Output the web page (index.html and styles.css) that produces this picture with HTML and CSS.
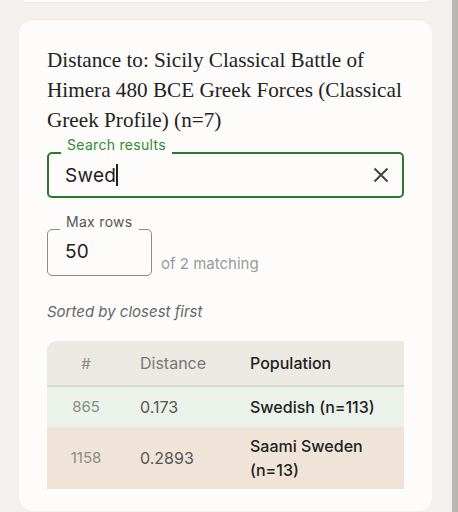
FILE: index.html
```html
<!DOCTYPE html>
<html lang="en">
<head>
    <meta charset="UTF-8">
    <meta name="viewport" content="width=device-width, initial-scale=1.0">
    <title>Distance results</title>
    <link rel="stylesheet" href="styles.css">
</head>
<body>
    <div class="page">
        <!-- tail of the card above -->
        <div class="card card-prev"></div>

        <!-- Distance card -->
        <div class="card">
            <h2 class="title">Distance to: Sicily Classical Battle of Himera 480 BCE Greek Forces (Classical Greek Profile) (n=7)</h2>

            <div class="field search-field">
                <span class="field-label">Search results</span>
                <div class="field-value">Swed<span class="caret"></span></div>
                <svg class="clear-icon" width="16" height="16" viewBox="0 0 16 16">
                    <path d="M1.5 1.5 L14.5 14.5 M14.5 1.5 L1.5 14.5" stroke="#444" stroke-width="2" fill="none"/>
                </svg>
            </div>

            <div class="rows-line">
                <div class="field rows-field">
                    <span class="field-label">Max rows</span>
                    <div class="field-value">50</div>
                </div>
                <span class="matching">of 2 matching</span>
            </div>

            <p class="sorted">Sorted by closest first</p>

            <div class="table-wrap">
                <table class="results">
                    <thead>
                        <tr>
                            <th class="col-rank">#</th>
                            <th class="col-dist">Distance</th>
                            <th class="col-pop">Population</th>
                        </tr>
                    </thead>
                    <tbody>
                        <tr class="row-near">
                            <td class="col-rank">865</td>
                            <td class="col-dist">0.173</td>
                            <td class="col-pop">Swedish (n=113)</td>
                        </tr>
                        <tr class="row-far">
                            <td class="col-rank">1158</td>
                            <td class="col-dist">0.2893</td>
                            <td class="col-pop">Saami Sweden (n=13)</td>
                        </tr>
                    </tbody>
                </table>
            </div>
        </div>
    </div>
    <div class="scrollbar"></div>
</body>
</html>
```

FILE: styles.css
```css
body {
    font-family: Inter, "Noto Sans", sans-serif;
    margin: 0;
    padding: 0;
    display: flex;
    height: 100vh;
    overflow: hidden;
    background-color: #f2f1ed;
    color: #222;
}
.page {
    flex: 1;
    padding: 0 20px 0 19px;
}
.scrollbar {
    width: 6px;
    background-color: #bab7af;
}
.card {
    background-color: #fdfcfa;
    border-radius: 14px;
    border-top: 1px solid #f4e6d2;
    padding: 26px 28px 22px 28px;
}
.card-prev {
    height: 2px;
    margin-top: -14px;
    border-top: none;
    margin-bottom: 16px;
    padding: 14px 0 0 0;
    border-bottom: 1px solid #ebe9e3;
}
.title {
    font-family: "Liberation Serif", "DejaVu Serif", serif;
    font-weight: 400;
    font-size: 21.2px;
    line-height: 30px;
    margin: -1px 0 17px 0;
    color: #222;
}
.field {
    position: relative;
    border-radius: 5px;
    display: flex;
    align-items: center;
    box-sizing: border-box;
    height: 46px;
}
.field-label {
    position: absolute;
    left: 12px;
    top: -16px;
    height: 17px;
    padding: 0 6px;
    background-color: #fdfcfa;
    font-size: 14px;
    line-height: 14px;
    letter-spacing: 0.3px;
}
.field-value {
    padding-left: 16px;
    font-size: 19px;
    letter-spacing: 0.3px;
    color: #222;
    flex: 1;
}
.search-field {
    border: 2px solid #2b7a2b;
}
.search-field .field-label {
    color: #2f8a33;
}
.caret {
    display: inline-block;
    width: 1.5px;
    height: 22px;
    background-color: #222;
    vertical-align: -4px;
}
.clear-icon {
    margin-right: 13px;
}
.rows-line {
    display: flex;
    align-items: flex-end;
    margin-top: 31px;
}
.rows-field {
    border: 1px solid #8c8c8c;
    width: 105px;
    height: 47px;
}
.rows-field .field-label {
    color: #555;
    left: 12px;
    top: -15px;
}
.rows-field .field-value {
    padding-left: 17px;
    padding-bottom: 2px;
}
.matching {
    margin-left: 9px;
    font-size: 15px;
    color: #9a9a9a;
    padding-bottom: 3px;
}
.sorted {
    margin: 26px 0 20px 0;
    font-size: 15px;
    font-style: italic;
    color: #666;
}
.table-wrap {
    overflow: hidden;
    border-top-left-radius: 9px;
}
.results {
    width: 100%;
    border-collapse: collapse;
    table-layout: fixed;
    font-size: 16px;
}
.results th {
    background-color: #ece9e2;
    height: 44px;
    font-weight: 400;
    color: #777;
    text-align: left;
    border-bottom: 2px solid #dad6ce;
    padding: 0 0 0 15px;
}
.results td {
    padding: 7px 0 7px 15px;
    line-height: 24px;
    color: #555;
}
.results .col-rank {
    width: 78px;
    padding-left: 0;
    text-align: center;
    color: #8a8a8a;
    font-size: 15px;
}
.results .col-dist {
    width: 95px;
}
.results th.col-pop {
    color: #222;
    font-weight: 500;
}
.results td.col-pop {
    color: #222;
    font-weight: 500;
    padding-right: 18px;
}
.row-near {
    height: 41px;
}
.row-near td {
    background-color: #eaf2e9;
}
.row-far {
    height: 62px;
}
.row-far td {
    background-color: #f0e4d8;
}
```
